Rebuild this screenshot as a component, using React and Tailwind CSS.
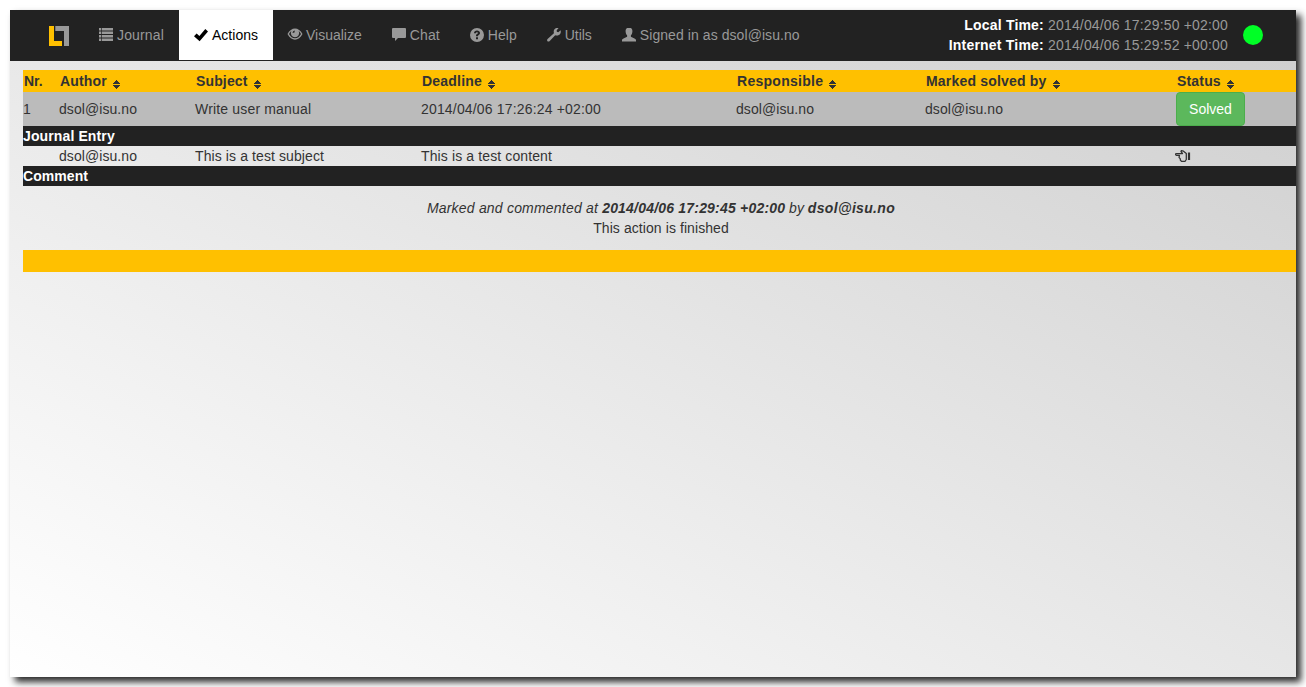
import React from 'react';

const Icon = ({ children }) => (
  <svg viewBox="0 0 14 14" className="h-[14px] w-[14px] shrink-0 fill-current">{children}</svg>
);

const icons = {
  journal: (
    <Icon>
      <path d="M0 0h2v2.500H0zM2.700 0H14v2.500H2.700zM0 3.500h2V6H0zM2.700 3.500H14V6H2.700zM0 7h2v2.500H0zM2.700 7H14v2.500H2.700zM0 10.500h2V13H0zM2.700 10.500H14V13H2.700z" />
    </Icon>
  ),
  actions: (
    <Icon>
      <path d="M0 8.200 2.600 5.400 5.400 7.900 11.300 1 14 3.400 5.600 13.200z" />
    </Icon>
  ),
  visualize: (
    <svg viewBox="0 0 15 14" className="-mr-px -ml-px h-[14px] w-[16px] shrink-0 fill-current">
      <path fillRule="evenodd" d="M0 6C2 2.400 4.600.5 7.500.5S13 2.400 15 6C13 9.900 10.400 11.700 7.500 11.700S2 9.900 0 6zM1.500 6.100C3 8.900 5 10.300 7.500 10.300S12 8.900 13.500 6.100C12.900 4.700 12 3.700 11.200 3.100A4.200 4.200 0 1 1 3.800 3.100C3 3.700 2.100 4.700 1.500 6.100z" />
      <path d="M5 5A2.700 2.700 0 0 1 7.300 2.600L7 4.500z" fill="#222" />
    </svg>
  ),
  chat: (
    <Icon>
      <path d="M1 0h12a1 1 0 0 1 1 1v8a1 1 0 0 1-1 1H6L3 13v-3H1a1 1 0 0 1-1-1V1a1 1 0 0 1 1-1z" />
    </Icon>
  ),
  help: (
    <svg viewBox="0 -0.500 14 14" className="-mt-px h-[14px] w-[14px] shrink-0 fill-current">
      <path fillRule="evenodd" d="M7 -.5a7 7 0 1 1 0 14A7 7 0 0 1 7 -.5zM6 7.700h2V7C8.800 6.600 10 5.900 10 4.500 10 2.900 8.700 2 7 2S4.100 3 4 4.700h2C6 4.100 6.400 3.700 7 3.700s1 .3 1 .9C8 5.500 6 5.600 6 7.100zM6 8.800v2h2v-2z" />
    </svg>
  ),
  utils: (
    <Icon>
      <path d="M13.600 2.200 11.300 4.300 9.800 3.700 9.700 2.300 11.600.1C9.500-.8 6.700.8 6.700 3.500L6.900 5.200.6 11.100C-.8 12.500 1 14.500 2.500 13.200L8.200 7.200C10 8.100 14.800 7 13.600 2.200z" />
    </Icon>
  ),
  user: (
    <Icon>
      <path d="M7-.4C4.700-.4 3.500 1 3.600 3.400 3.700 5.400 4.400 6.500 5.100 7.300V8.700L1.500 10.400C.4 10.900 0 11.400 0 12.300V13.400H14V12.300C14 11.400 13.600 10.900 12.500 10.400L8.900 8.700V7.300C9.600 6.500 10.300 5.400 10.400 3.400 10.500 1 9.300-.4 7-.4z" />
    </Icon>
  ),
};

const nav = [
  ['journal', 'Journal', 'tracking-[0.153px]'],
  ['actions', 'Actions', 'tracking-[0.01px]'],
  ['visualize', 'Visualize', 'tracking-[0px]'],
  ['chat', 'Chat', 'tracking-[0.11px]'],
  ['help', 'Help', 'tracking-[0.05px]'],
  ['utils', 'Utils', 'tracking-[-0.04px]'],
  ['user', 'Signed in as dsol@isu.no', 'tracking-[0.07px]'],
];

const headings = [
  ['Author', 'tracking-[0.17px]'],
  ['Subject', 'tracking-[0.14px]'],
  ['Deadline', 'tracking-[0.22px]'],
  ['Responsible', 'tracking-[0.27px]'],
  ['Marked solved by', 'tracking-[0.19px]'],
  ['Status', 'tracking-[0.17px]'],
];

const Sort = () => (
  <svg viewBox="0 0 7 9" shapeRendering="crispEdges" className="mt-[6px] ml-[6px] h-[9px] w-[7px] fill-[#333]">
    <path d="M3 0h1v1h1v1h1v1h1v1H0V3h1V2h1V1h1zM0 5h7v1H6v1H5v1H4v1H3V8H2V7H1V6H0z" />
  </svg>
);

const cols = 'grid grid-cols-[36px_136px_226px_315px_189px_251px_1fr] items-center';

export default function App() {
  return (
    <div className="h-[687px] w-[1306px] overflow-hidden bg-white p-[10px] font-['Liberation_Sans',Arial,sans-serif] text-[14px] leading-5 text-[#333]">
      <div className="h-[667px] w-[1286px] bg-linear-[to_top_right,#ffffff,#cecece] shadow-[5px_5px_7px_#2a2a2a]">
        <header className="flex h-[51px] items-start bg-[#222] pl-[39px] text-[#999]">
          <svg viewBox="0 0 20 20" className="mt-4 mr-[15px] h-5 w-5">
            <path d="M0 0h5v15h8v5H0z" fill="#ffc000" />
            <path d="M6.300 0H20v20h-5V5H6.300z" fill="#999" />
          </svg>
          <nav className="flex">
            {nav.map(([key, label, tracking]) => (
              <a
                key={key}
                className={
                  'flex h-[50px] items-center gap-1 px-[15px] whitespace-nowrap ' +
                  (key === 'actions' ? 'bg-white text-black' : '')
                }
              >
                {icons[key]}
                <span className={tracking}>{label}</span>
              </a>
            ))}
          </nav>
          <div className="mt-[5px] ml-auto text-right tracking-[0.17px]">
            <p><b className="tracking-[0.19px] text-white">Local Time:</b> 2014/04/06 17:29:50 +02:00</p>
            <p><b className="tracking-[0.21px] text-white">Internet Time:</b> 2014/04/06 15:29:52 +00:00</p>
          </div>
          <div className="mt-[15px] mr-[33px] ml-[15px] h-5 w-5 rounded-full bg-[#00ff26]" />
        </header>

        <main className="mt-[9px] ml-[13px]">
          <div className={cols + ' h-[22px] bg-[#ffc000] pl-px font-bold'}>
            <span>Nr.</span>
            {headings.map(([h, tracking]) => (
              <span key={h} className={'flex items-center ' + tracking}>{h}<Sort /></span>
            ))}
          </div>
          <div className={cols + ' h-[34px] bg-[#bbb]'}>
            <span>1</span>
            <span className="tracking-[0.07px]">dsol@isu.no</span>
            <span className="tracking-[0.17px]">Write user manual</span>
            <span className="tracking-[0.17px]">2014/04/06 17:26:24 +02:00</span>
            <span className="tracking-[0.07px]">dsol@isu.no</span>
            <span className="tracking-[0.07px]">dsol@isu.no</span>
            <button className="h-[34px] w-[69px] rounded-[4px] border border-[#4cae4c] bg-[#5cb85c] text-white">Solved</button>
          </div>
          <div className="h-5 bg-[#222] font-bold tracking-[0.12px] text-white">Journal Entry</div>
          <div className={cols + ' h-5'}>
            <span />
            <span className="tracking-[0.07px]">dsol@isu.no</span>
            <span className="tracking-[0.1px]">This is a test subject</span>
            <span className="col-span-3 tracking-[0.12px]">This is a test content</span>
            <svg viewBox="0 0 16 12" className="-mt-px -ml-px h-3 w-4" fill="none" stroke="#333" strokeWidth="1.25" strokeLinejoin="round">
              <path d="M5 3.500H1.500C.3 3.500.3 5.300 1.500 5.300H4.500L4 7.300 5.300 8.800V10L6.500 11.300H10L11.300 9.500V3.500L8.500 1.200 6.300.6 6 1.700 7.500 3.500H5" />
              <path d="M14 2.500v7.500" strokeWidth="2.200" />
            </svg>
          </div>
          <div className="h-5 bg-[#222] font-bold tracking-[0.07px] text-white">Comment</div>
          <div className="h-16 pt-3 pl-[3px] text-center">
            <p className="italic">
              <span className="tracking-[0.2px]">Marked and commented at </span>
              <b className="tracking-[0.2px]">2014/04/06 17:29:45 +02:00</b> by{' '}
              <b className="tracking-[0.33px]">dsol@isu.no</b>
            </p>
            <p className="tracking-[0.08px]">This action is finished</p>
          </div>
          <div className="h-[22px] bg-[#ffc000]" />
        </main>
      </div>
    </div>
  );
}
